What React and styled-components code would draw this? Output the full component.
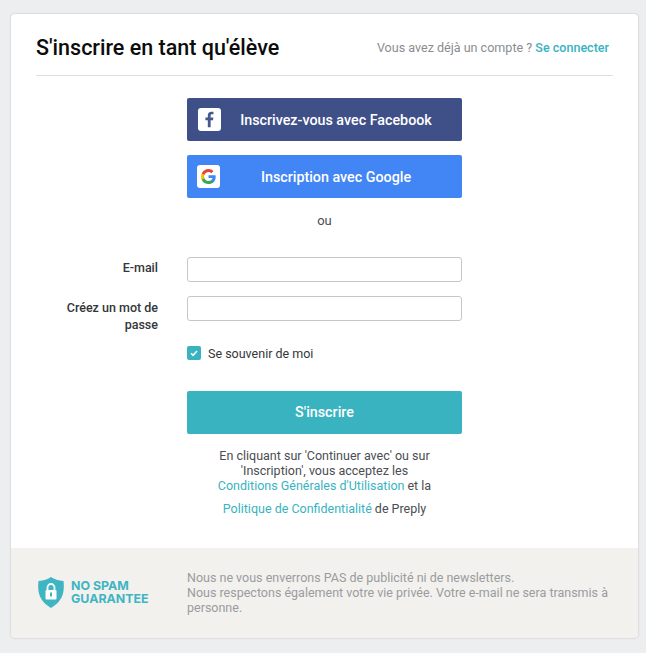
import React from 'react'
import styled, { createGlobalStyle } from 'styled-components'

const GlobalStyle = createGlobalStyle`
  html, body {
    margin: 0;
    padding: 0;
    background-color: #eceef0;
    font-family: Roboto, "Liberation Sans", sans-serif;
  }
`

const Page = styled.div`
  width: 646px;
  height: 653px;
  padding: 14px 8px 15px 11px;
  box-sizing: border-box;
`

const Card = styled.div`
  height: 100%;
  display: flex;
  flex-direction: column;
  background-color: white;
  border-radius: 4px;
  box-shadow: 0 0 2px rgba(0, 0, 0, 0.25);
  overflow: hidden;
`

const Header = styled.header`
  height: 62px;
  margin: 0 25px;
  padding: 5px 4px 0 0;
  display: flex;
  align-items: center;
  justify-content: space-between;
  border-bottom: 1px solid #dcdee0;
  box-sizing: border-box;
  flex-shrink: 0;
  width: 577px;
`

const Title = styled.h1`
  margin: 0;
  font-size: 21.5px;
  font-weight: 500;
  color: #0c0c0c;
`

const LoginHint = styled.span`
  font-size: 12.55px;
  color: #8a8d90;
`

const TealLink = styled.a`
  color: #38b3bf;
  font-weight: ${(p) => (p.$bold ? 500 : 400)};
  text-decoration: none;
`

const Main = styled.main`
  flex: 1;
  padding-top: 22px;
  display: flex;
  flex-direction: column;
`

const Column = styled.div`
  width: 275px;
  margin-left: 176px;
`

const SocialButton = styled.button`
  width: 100%;
  height: 43px;
  margin-bottom: 14px;
  padding: 0 ${(p) => p.$right}px 0 ${(p) => p.$left}px;
  display: flex;
  align-items: center;
  border: none;
  border-radius: 2px;
  background-color: ${(p) => p.$color};
  color: white;
  font-family: inherit;
  font-size: 14.3px;
  font-weight: 500;
`

const SocialIcon = styled.span`
  width: 23px;
  height: 23px;
  display: flex;
  align-items: center;
  justify-content: center;
  flex-shrink: 0;
  background-color: white;
  border-radius: 3px;
`

const SocialLabel = styled.span`
  flex: 1;
  text-align: center;
`

const Or = styled.div`
  height: 17px;
  line-height: 17px;
  text-align: center;
  font-size: 13px;
  color: #4a4d52;
`

const Fields = styled.div`
  margin-top: 28px;
  display: grid;
  grid-template-columns: 147px 275px;
  column-gap: 29px;
  row-gap: 14px;
`

const Label = styled.label`
  padding: ${(p) => p.$top}px 0 0 50px;
  text-align: right;
  font-size: 12.5px;
  font-weight: 500;
  line-height: 17px;
  color: #33363a;
`

const Input = styled.input`
  width: 100%;
  height: 25px;
  box-sizing: border-box;
  border: 1px solid #c4c6c8;
  border-radius: 3px;
  background-color: white;
`

const Remember = styled.div`
  margin-top: 13px;
  height: 14px;
  display: flex;
  align-items: center;
  gap: 7px;
  font-size: 12.5px;
  color: #33363a;
`

const CheckBox = styled.span`
  width: 14px;
  height: 14px;
  display: flex;
  align-items: center;
  justify-content: center;
  border-radius: 2px;
  background-color: #38b3bf;
`

const SubmitButton = styled.button`
  width: 100%;
  height: 43px;
  margin-top: 31px;
  padding-bottom: 2px;
  border: none;
  border-radius: 2px;
  background-color: #38b3bf;
  color: white;
  font-family: inherit;
  font-size: 14.3px;
  font-weight: 500;
`

const Terms = styled.div`
  width: 240px;
  margin: 14px auto 0;
  text-align: center;
  font-size: 12.5px;
  line-height: 15px;
  color: #4a4d52;
`

const TermsLine = styled.div`
  margin-top: ${(p) => p.$top || 0}px;
  white-space: nowrap;
  display: flex;
  justify-content: center;
  gap: 3px;
`

const Footer = styled.footer`
  height: 90px;
  flex-shrink: 0;
  display: flex;
  align-items: center;
  padding: 0 0 2px 27px;
  box-sizing: border-box;
  background-color: #f2f1ee;
`

const Badge = styled.div`
  width: 149px;
  display: flex;
  align-items: center;
  gap: 7px;
  flex-shrink: 0;
`

const BadgeText = styled.div`
  font-family: Inter, "Open Sans", sans-serif;
  font-size: 12.4px;
  line-height: 13px;
  font-weight: 700;
  color: #3fb5c3;
`

const FooterText = styled.p`
  margin: 0;
  width: 430px;
  font-size: 12.5px;
  line-height: 15px;
  color: #9a9c9e;
`

const App = () => (
  <Page>
    <GlobalStyle />
    <Card>
      <Header>
        <Title>S'inscrire en tant qu'élève</Title>
        <LoginHint>
          Vous avez déjà un compte ? <TealLink href="#" $bold>Se connecter</TealLink>
        </LoginHint>
      </Header>
      <Main>
        <Column>
          <SocialButton $color="#3f5088" $left={11} $right={11}>
            <SocialIcon>
              <svg width="17" height="17" viewBox="0 0 24 24">
                <path
                  fill="#46598f"
                  d="M13.600 23v-10h3.400l.5-3.900h-3.900V6.600c0-1.100.3-1.900 1.900-1.900h2.100V1.200C17.200 1.100 16 1 14.600 1c-3 0-5 1.800-5 5.200v2.900H6.200V13h3.400v10z"
                />
              </svg>
            </SocialIcon>
            <SocialLabel>Inscrivez-vous avec Facebook</SocialLabel>
          </SocialButton>
          <SocialButton $color="#4285f4" $left={10} $right={10}>
            <SocialIcon>
              <svg width="15" height="15" viewBox="0 0 24 24">
                <path fill="#4285F4" d="M23.500 12.300c0-.8-.1-1.600-.2-2.300H12v4.500h6.500c-.3 1.500-1.100 2.800-2.400 3.600v3h3.900c2.200-2.100 3.500-5.100 3.500-8.800z" />
                <path fill="#34A853" d="M12 24c3.200 0 6-1.100 8-2.900l-3.900-3c-1.100.7-2.400 1.200-4.100 1.200-3.100 0-5.800-2.100-6.700-5H1.300v3.100C3.300 21.300 7.300 24 12 24z" />
                <path fill="#FBBC05" d="M5.300 14.300c-.5-1.500-.5-3.100 0-4.600V6.600h-4c-1.700 3.300-1.700 7.500 0 10.800z" />
                <path fill="#EA4335" d="M12 4.800c1.800 0 3.300.6 4.600 1.800l3.400-3.400C17.900 1.200 15.200 0 12 0 7.300 0 3.300 2.700 1.300 6.600l4 3.100c.9-2.800 3.600-4.900 6.700-4.900z" />
              </svg>
            </SocialIcon>
            <SocialLabel>Inscription avec Google</SocialLabel>
          </SocialButton>
          <Or>ou</Or>
        </Column>
        <Fields>
          <Label $top={2}>E-mail</Label>
          <Input type="text" />
          <Label $top={3}>Créez un mot de passe</Label>
          <Input type="password" />
        </Fields>
        <Column>
          <Remember>
            <CheckBox>
              <svg width="10" height="10" viewBox="0 0 10 10">
                <path d="M2 5.200l2.100 2.100L8 3" fill="none" stroke="white" strokeWidth="1.500" />
              </svg>
            </CheckBox>
            Se souvenir de moi
          </Remember>
          <SubmitButton>S'inscrire</SubmitButton>
          <Terms>
            <TermsLine>En cliquant sur 'Continuer avec' ou sur</TermsLine>
            <TermsLine>'Inscription', vous acceptez les</TermsLine>
            <TermsLine>
              <TealLink href="#">Conditions Générales d'Utilisation</TealLink> et la
            </TermsLine>
            <TermsLine $top={8}>
              <TealLink href="#">Politique de Confidentialité</TealLink> de Preply
            </TermsLine>
          </Terms>
        </Column>
      </Main>
      <Footer>
        <Badge>
          <svg width="26" height="31" viewBox="0 0 26 31">
            <path
              fill="#3fb5c3"
              d="M13 0c3 2.200 7.500 3.700 12.500 4 .5 4 .5 8.500-.5 12.500C23.500 22.500 19 27.500 13 31 7 27.500 2.500 22.500 1 16.500 0 12.500 0 8 .5 4 5.500 3.700 10 2.200 13 0z"
            />
            <rect x="7.500" y="13" width="11" height="9.500" rx="1" fill="white" />
            <path d="M9.500 13V10.500a3.500 3.500 0 0 1 7 0V13" fill="none" stroke="white" strokeWidth="1.800" />
            <rect x="12" y="15.500" width="2" height="4" fill="#3fb5c3" />
          </svg>
          <BadgeText>NO SPAM<br />GUARANTEE</BadgeText>
        </Badge>
        <FooterText>
          Nous ne vous enverrons PAS de publicité ni de newsletters.<br />
          Nous respectons également votre vie privée. Votre e-mail ne sera transmis à personne.
        </FooterText>
      </Footer>
    </Card>
  </Page>
)

export default App
